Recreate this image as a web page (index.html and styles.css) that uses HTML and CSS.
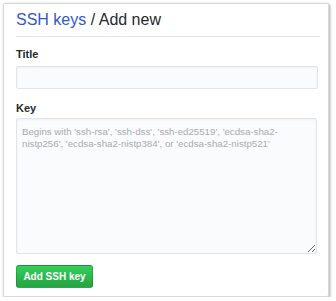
FILE: index.html
```html
<!DOCTYPE html>
<html>
<head>
<meta charset="utf-8">
<link rel="stylesheet" href="styles.css">
</head>
<body>
<div class="card">
  <h2 class="title"><a class="crumb" href="#">SSH keys</a> / Add new</h2>
  <form class="form">
    <label class="label label-title">Title</label>
    <input class="input" type="text">
    <label class="label label-key">Key</label>
    <textarea class="textarea" placeholder="Begins with 'ssh-rsa', 'ssh-dss', 'ssh-ed25519', 'ecdsa-sha2-nistp256', 'ecdsa-sha2-nistp384', or 'ecdsa-sha2-nistp521'"></textarea>
    <div class="actions"><button class="btn" type="button">Add SSH key</button></div>
  </form>
</div>
</body>
</html>
```

FILE: styles.css
```css
html, body {
  margin: 0;
  padding: 0;
  background: #ffffff;
}
body {
  padding: 3px 0 0 3px;
  font-family: "Liberation Sans", Arial, sans-serif;
  color: #24292e;
}
.card {
  width: 326px;
  height: 294px;
  box-sizing: border-box;
  border: 1px solid #d8d8d8;
  border-radius: 2px;
  box-shadow: 1px 1px 3px rgba(0, 0, 0, 0.35);
  padding: 5px 8px 0 12px;
  background: #fff;
}
.title {
  margin: 0;
  font-size: 16px;
  font-weight: normal;
  line-height: 21px;
  padding-bottom: 6px;
  border-bottom: 1px solid #e1e4e8;
  color: #24292e;
}
.crumb {
  color: #3457c9;
  text-decoration: none;
}
.form {
  display: flex;
  flex-direction: column;
  align-items: flex-start;
}
.label {
  font-size: 11px;
  font-weight: bold;
  line-height: 14px;
  color: #24292e;
}
.label-title {
  margin-top: 10px;
}
.input {
  margin-top: 5px;
  width: 302px;
  height: 23px;
  box-sizing: border-box;
  border: 1px solid #e1e4e8;
  border-radius: 2px;
  background: #fafbfc;
  box-shadow: inset 0 1px 2px rgba(27, 31, 35, 0.05);
  padding: 3px 6px;
  font-family: "Liberation Sans", Arial, sans-serif;
  font-size: 11px;
}
.label-key {
  margin-top: 12px;
}
.textarea {
  margin-top: 3px;
  width: 301px;
  height: 136px;
  box-sizing: border-box;
  border: 1px solid #e1e4e8;
  border-radius: 2px;
  background: #fafbfc;
  box-shadow: inset 0 1px 2px rgba(27, 31, 35, 0.05);
  padding: 7px 5px 5px;
  font-family: "Liberation Sans", Arial, sans-serif;
  font-size: 9.7px;
  line-height: 12px;
  color: #24292e;
}
.textarea::placeholder {
  color: #a8abaf;
}
.actions {
  margin-top: 11px;
}
.btn {
  height: 23px;
  width: 77px;
  box-sizing: border-box;
  padding: 0;
  border: 1px solid rgba(27, 31, 35, 0.2);
  border-radius: 3px;
  background: linear-gradient(#34d058, #28a745 90%);
  color: #fff;
  font-family: "Liberation Sans", Arial, sans-serif;
  font-size: 10px;
  font-weight: bold;
}
```
